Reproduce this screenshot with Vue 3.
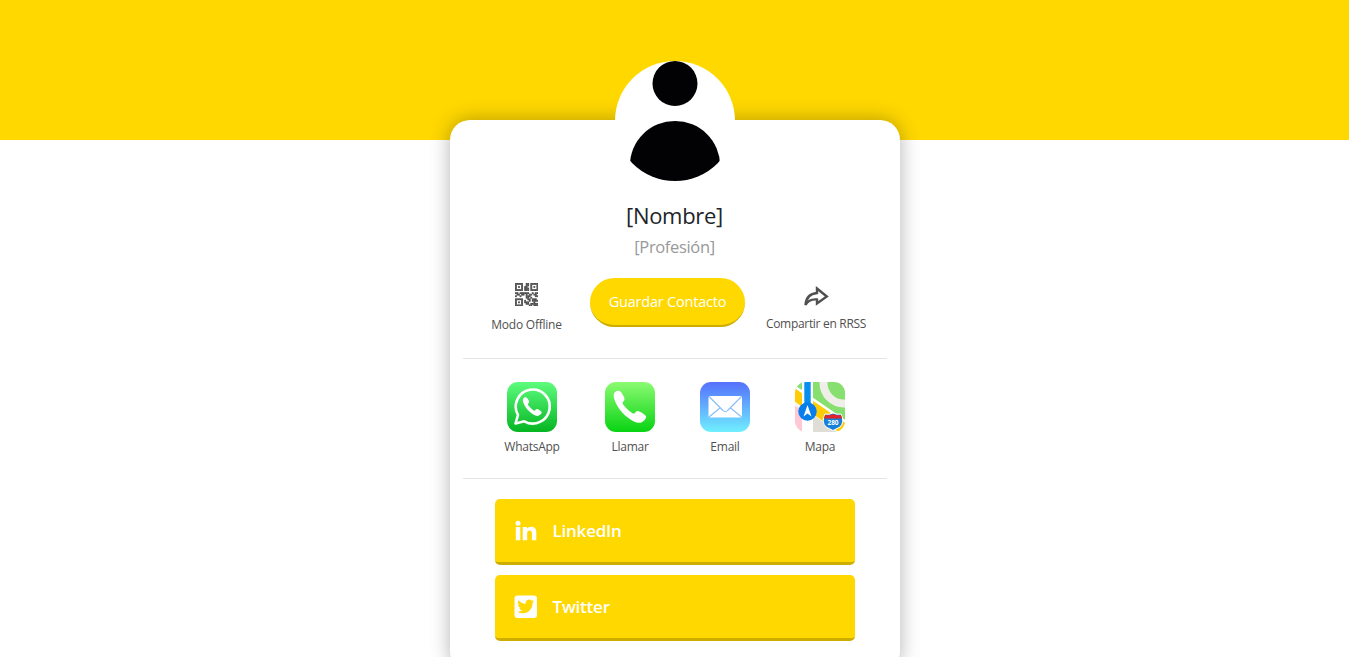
<script setup>
const apps = [
  { id: 'whatsapp', label: 'WhatsApp' },
  { id: 'call', label: 'Llamar' },
  { id: 'email', label: 'Email' },
  { id: 'map', label: 'Mapa' },
]
const handset = 'M10.2 10C12.5 8 15.500 8.500 17 11.500C18 13.500 19.500 15 19.500 17C19.500 19 17.500 19.500 17.500 21C18 23.500 26.500 31.500 28.700 31.800C30.500 31 31 28.800 33 29C35.500 29.500 38.500 31.500 40.800 33.800C41.800 35 40.500 37.500 38.500 39C36 41.500 32.500 41.200 29.500 39.800C20.500 35.500 13 27 10 19C8.500 15 8 12 10.200 10Z'
const qr = [
  '111110011011111',
  '100010011010001',
  '101010110010101',
  '100010111010001',
  '111110111011111',
  '000000000000000',
  '110111111001011',
  '011011010110110',
  '100100011100011',
  '000000011010000',
  '111110001101110',
  '100010100101111',
  '101010111000100',
  '100010011011111',
  '111110000110111',
]
const modules = qr.flatMap((row, y) => [...row].map((v, x) => ({ v, x, y }))).filter((m) => m.v === '1')
</script>

<template>
  <div class="page">
    <main class="card">
      <svg class="avatar" viewBox="0 0 120 120">
        <defs><clipPath id="round"><circle cx="60" cy="60" r="60" /></clipPath></defs>
        <circle cx="60" cy="60" r="60" fill="#fff" />
        <g clip-path="url(#round)" fill="#020103">
          <circle cx="60" cy="22.500" r="22.500" />
          <path d="M15 104A45 44 0 0 1 105 104V120H15Z" />
        </g>
      </svg>
      <h1>[Nombre]</h1>
      <h2>[Profesión]</h2>

      <section class="actions">
        <div class="action offline">
          <svg width="23" height="23" viewBox="0 0 15 15" fill="#505050">
            <rect v-for="m in modules" :key="`${m.x}-${m.y}`" :x="m.x" :y="m.y" width="1.2" height="1.2" />
          </svg>
          <span>Modo Offline</span>
        </div>
        <button class="save">Guardar Contacto</button>
        <div class="action share">
          <svg width="26" height="22" viewBox="0 0 26 22" fill="none" stroke="#505050" stroke-width="2.400">
            <path d="M14 3.500L23.800 11.500L14 18.500V14.500C8.500 14 5 15.500 2.500 20C3 12.500 7.500 8.500 14 8Z" />
          </svg>
          <span>Compartir en RRSS</span>
        </div>
      </section>

      <section class="apps">
        <div v-for="app in apps" :key="app.id" class="app" :class="app.id">
          <svg v-if="app.id === 'whatsapp'" width="50" height="50" viewBox="0 0 50 50">
            <defs><linearGradient id="wa" x2="0" y2="1"><stop stop-color="#5efc7d" /><stop offset="1" stop-color="#05b522" /></linearGradient></defs>
            <rect width="50" height="50" rx="11" fill="url(#wa)" />
            <path d="M8.500 41.500L11 33A17 17 0 1 1 17.300 39.300Z" fill="none" stroke="#fff" stroke-width="2.600" stroke-linejoin="round" />
            <path :d="handset" fill="#fff" transform="translate(10.800 10.200) scale(.58)" />
          </svg>
          <svg v-else-if="app.id === 'call'" width="50" height="50" viewBox="0 0 50 50">
            <defs><linearGradient id="ph" x2="0" y2="1"><stop stop-color="#8bfb72" /><stop offset="1" stop-color="#08d313" /></linearGradient></defs>
            <rect width="50" height="50" rx="11" fill="url(#ph)" />
            <path :d="handset" fill="#fff" />
          </svg>
          <svg v-else-if="app.id === 'email'" width="50" height="50" viewBox="0 0 50 50">
            <defs><linearGradient id="em" x2="0" y2="1"><stop stop-color="#5570fc" /><stop offset="1" stop-color="#70efff" /></linearGradient></defs>
            <rect width="50" height="50" rx="11" fill="url(#em)" />
            <rect x="8.500" y="14" width="33.500" height="21.500" rx="1.500" fill="#fff" />
            <path d="M9 14.500L23 28.500Q25.300 31 27.600 28.500L41.500 14.500M9 35L20.500 25.500M41.500 35L30 25.500" fill="none" stroke="#86bdf8" stroke-width="1.100" />
          </svg>
          <svg v-else width="50" height="50" viewBox="0 0 50 50">
            <defs><clipPath id="tile"><rect width="50" height="50" rx="11" /></clipPath></defs>
            <g clip-path="url(#tile)">
              <path d="M0 0H50V50H0Z" fill="#f7f5f1" />
              <path d="M0 0H7V16L0 7Z" fill="#86df6e" />
              <path d="M18 0H50V42L18 21Z" fill="#86df6e" />
              <circle cx="49" cy="1" r="20.500" fill="none" stroke="#f0eee8" stroke-width="8" />
              <path d="M0 24L8 28V50H0Z" fill="#ffc8d5" />
              <path d="M18 33L42 50H18Z" fill="#deded6" />
              <path d="M-3 9L55 49" stroke="#fff" stroke-width="13" />
              <path d="M-3 11L55 51" stroke="#ffcd05" stroke-width="11" />
              <path d="M7 0H18V50H7Z" fill="#fff" />
              <path d="M9.300 0H15.700V28H9.300Z" fill="#078ff0" />
              <circle cx="12.500" cy="29.500" r="9.200" fill="#087eed" />
              <path d="M12.500 23L16.500 34.500L12.500 31.500L8.500 34.500Z" fill="#fff" />
              <path d="M30 32Q34 33 38 31Q42 33 46 32Q50 40 45 45L38 48.500L31 45Q26 40 30 32Z" fill="#1680db" stroke="#fff" stroke-width="1" />
              <path d="M30 33Q34 34 38 32Q42 34 46 33L47 36.500H29Z" fill="#e2222c" />
              <text x="38" y="42.500" text-anchor="middle">280</text>
            </g>
          </svg>
          <span>{{ app.label }}</span>
        </div>
      </section>

      <nav class="links">
        <a class="linkedin">
          <svg width="24" height="24" viewBox="0 0 24 24" fill="#fff">
            <circle cx="4" cy="4.200" r="2.500" />
            <path d="M1.800 8H6.300V21.200H1.800ZM8.700 8H13V9.800C15 6.700 22.300 6.600 22.300 13V21.200H17.900V14C17.900 10.500 13.200 10.700 13.200 14V21.200H8.700Z" />
          </svg>
          <span>LinkedIn</span>
        </a>
        <a class="twitter">
          <svg width="24" height="24" viewBox="0 0 24 24">
            <rect x=".500" y=".500" width="22.500" height="22.500" rx="3" fill="#fff" />
            <path transform="translate(3.400 3.100) scale(.7)" fill="#ffd800" d="M23.950 4.570a10 10 0 0 1-2.820.770 4.960 4.960 0 0 0 2.160-2.720 9.900 9.900 0 0 1-3.130 1.180 4.920 4.920 0 0 0-8.380 4.480A13.930 13.930 0 0 1 1.640 3.160a4.920 4.920 0 0 0 1.520 6.570 4.900 4.900 0 0 1-2.230-.610v.060a4.920 4.920 0 0 0 3.950 4.830 5 5 0 0 1-2.210.080 4.940 4.940 0 0 0 4.600 3.420A9.870 9.870 0 0 1 0 19.540a13.990 13.990 0 0 0 7.550 2.210c9.050 0 14-7.500 14-13.990 0-.210 0-.420-.020-.630a9.940 9.940 0 0 0 2.420-2.560z" />
          </svg>
          <span>Twitter</span>
        </a>
      </nav>
    </main>
  </div>
</template>

<style>
body { margin: 0; background: #fff; overflow: hidden; }
</style>

<style scoped>
* { box-sizing: border-box; }
.page {
  height: 657px;
  padding-top: 120px;
  overflow: hidden;
  background: linear-gradient(#ffd800 140px, #fff 140px);
  font-family: "Open Sans", "Noto Sans", sans-serif;
}
.card {
  display: flow-root;
  width: 450px;
  height: 551px;
  margin-left: 450px;
  padding: 0 13px;
  border-radius: 20px;
  background: #fff;
  box-shadow: 0 0 20px rgba(0, 0, 0, .3);
}
svg { display: block; flex: none; }
.avatar { width: 120px; height: 120px; margin: -59px auto 0; }
h1, h2 { margin: 0; padding-right: 1px; font-weight: 400; text-align: center; white-space: nowrap; }
h1 { margin-top: 18px; height: 32px; font-size: 22px; line-height: 32px; letter-spacing: -.3px; color: #212529; }
h2 { margin-top: 4px; height: 24px; font-size: 16.500px; line-height: 24px; letter-spacing: -.35px; color: #999; }
.actions { display: flex; align-items: flex-start; height: 81px; margin-top: 19px; border-bottom: 1px solid #e5e5e5; }
.action { display: flex; flex-direction: column; align-items: center; white-space: nowrap; font-size: 12px; line-height: 18px; letter-spacing: -.23px; color: #505050; }
.offline { width: 127px; padding-top: 5px; }
.offline span { margin-top: 10px; }
.save { width: 155px; height: 49px; border: 0; border-bottom: 2px solid #ccad00; border-radius: 25px; padding: 0; background: #ffd800; color: #fff; font: 14.500px/45px "Open Sans", sans-serif; letter-spacing: -.2px; white-space: nowrap; }
.share { width: 142px; padding-top: 7px; }
.share span { margin-top: 8px; letter-spacing: -.3px; }
.apps { display: flex; height: 120px; padding: 23px 18px 0 18.500px; border-bottom: 1px solid #e5e5e5; }
.app { display: flex; flex-direction: column; align-items: center; width: 95px; font-size: 12px; line-height: 18px; letter-spacing: -.25px; color: #505050; }
.app:first-child { width: 101px; }
.app span { margin-top: 6px; }
.app text { font: 700 6.500px "Open Sans", sans-serif; letter-spacing: 0; fill: #fff; }
.links { display: grid; gap: 10px; padding: 20px 32px; }
.links a { display: flex; align-items: center; height: 66px; padding: 0 19px; border-bottom: 3px solid #ccad00; border-radius: 5px; background: #ffd800; color: #fff; font-size: 17px; font-weight: 600; letter-spacing: -.22px; }
.links span { margin-left: 14.500px; }
</style>
